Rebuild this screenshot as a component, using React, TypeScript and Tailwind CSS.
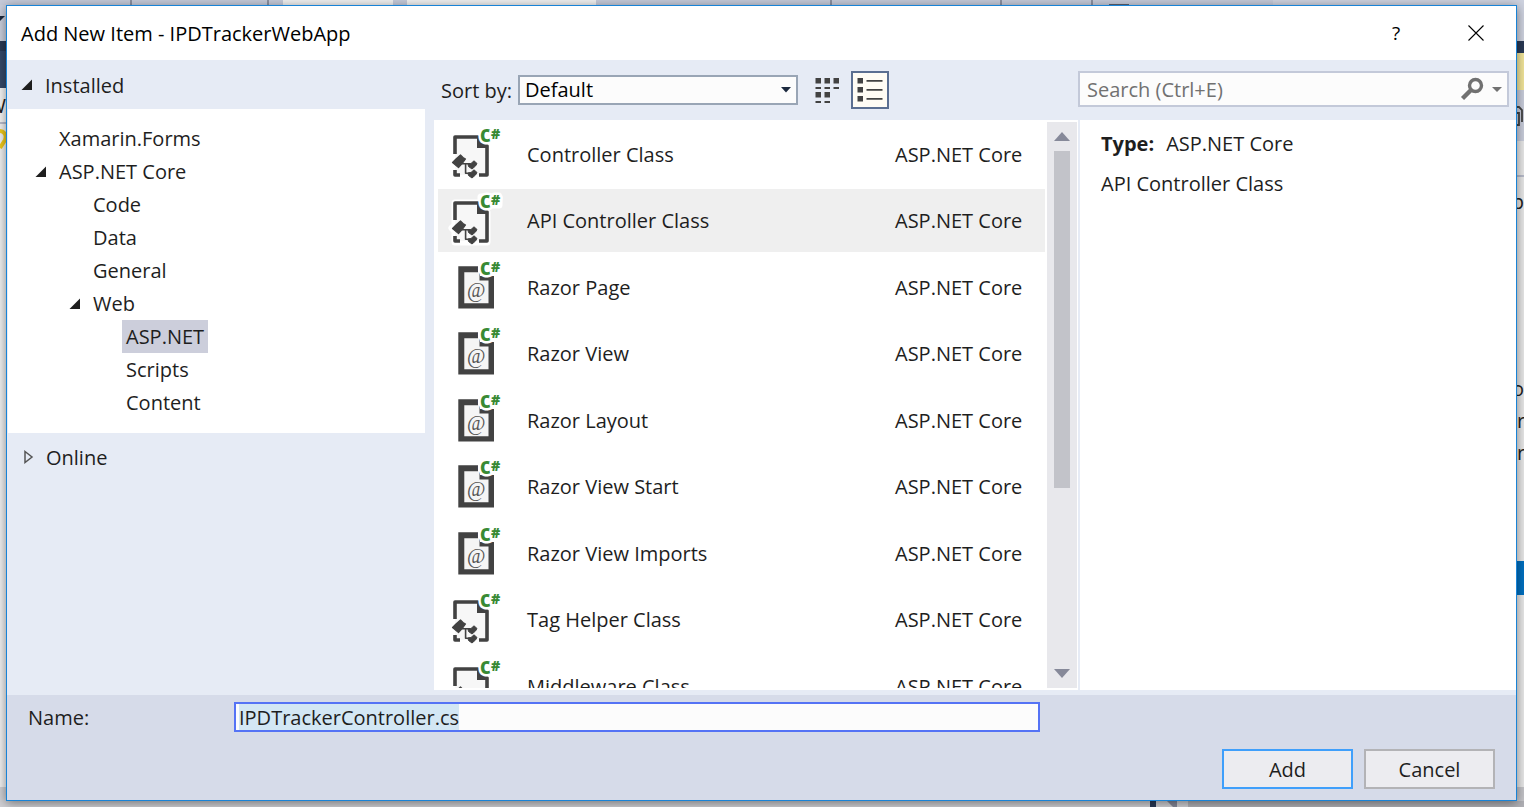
import { useEffect, useRef, useState } from "react";

type Glyph = "class" | "razor";

const items: { name: string; glyph: Glyph }[] = [
  { name: "Controller Class", glyph: "class" },
  { name: "API Controller Class", glyph: "class" },
  { name: "Razor Page", glyph: "razor" },
  { name: "Razor View", glyph: "razor" },
  { name: "Razor Layout", glyph: "razor" },
  { name: "Razor View Start", glyph: "razor" },
  { name: "Razor View Imports", glyph: "razor" },
  { name: "Tag Helper Class", glyph: "class" },
  { name: "Middleware Class", glyph: "class" },
];

const tree: { label: string; indent: string; open?: boolean }[] = [
  { label: "Xamarin.Forms", indent: "pl-[28px]" },
  { label: "ASP.NET Core", indent: "pl-[28px]", open: true },
  { label: "Code", indent: "pl-[62px]" },
  { label: "Data", indent: "pl-[62px]" },
  { label: "General", indent: "pl-[62px]" },
  { label: "Web", indent: "pl-[62px]", open: true },
  { label: "ASP.NET", indent: "pl-[95px]" },
  { label: "Scripts", indent: "pl-[95px]" },
  { label: "Content", indent: "pl-[95px]" },
];

function OpenArrow() {
  return (
    <svg width="12" height="12" viewBox="0 0 12 12" aria-hidden="true">
      <path d="M11 0.5V11H0.5Z" fill="#1e1e1e" />
    </svg>
  );
}

function CSharp() {
  return (
    <g
      fill="#388a34"
      stroke="#fff"
      strokeWidth="5"
      strokeLinejoin="round"
      paintOrder="stroke"
      fontFamily="'Open Sans', sans-serif"
      fontWeight="800"
    >
      <text x="30" y="14" fontSize="17">C</text>
      <text x="41" y="11" fontSize="14">#</text>
    </g>
  );
}

function ClassIcon() {
  return (
    <svg width="52" height="54" viewBox="0 0 52 54" className="shrink-0 overflow-visible" aria-hidden="true">
      <path
        d="M5 9H28L37 18V48H5Z M10 26L2 34L8 40Z M31 3H49V11H31Z"
        fill="#f7f7f7"
        stroke="#fff"
        strokeWidth="7"
        strokeLinejoin="round"
      />
      <path d="M5 9H28L37 18V47H5Z" fill="#f7f7f7" />
      <g fill="#424242" stroke="#424242" strokeLinejoin="round">
        <path d="M5 26V9H28L37 18V47H29M5 42V47H10" fill="none" strokeWidth="3.6" />
        <path d="M27 8L38 18V20H27Z" stroke="none" />
        <path d="M10.5 27L13 29.5L15.5 31L13 34.5L8.5 39.5L2.5 34.5L6 31Z" strokeWidth="1.2" />
        <path d="M12 35.8H20M15.6 35.8V45.2H20" fill="none" strokeWidth="1.6" />
        <path
          d="M18 36L21 35.5L24 32.8L27 35.5L25.5 38L22 41L18.5 38.5Z M18 45L21 44.5L24 41.8L27 44.5L25.5 47L22 50L18.5 47.5Z"
          strokeWidth="1"
        />
      </g>
      <CSharp />
    </svg>
  );
}

function RazorIcon() {
  return (
    <svg width="52" height="54" viewBox="0 0 52 54" className="shrink-0 overflow-visible" aria-hidden="true">
      <path d="M8.3 5.3H28V12H30V15H44V47.5H8.3Z" fill="#424242" />
      <path d="M14.3 11.3H29.5V19.5H38.5V42.3H14.3Z" fill="#f5f5f5" />
      <text
        x="26.2"
        y="36"
        textAnchor="middle"
        fontSize="20"
        fill="#555"
        fontFamily="'Liberation Serif', serif"
      >
        @
      </text>
      <CSharp />
    </svg>
  );
}

function TemplateList() {
  const [selected, setSelected] = useState(1);
  return (
    <div className="flex min-h-0 flex-1 bg-white">
      <ul className="mb-[2px] min-w-0 flex-1 overflow-hidden pt-[3px] pr-0.5 pl-1">
        {items.map((item, i) => (
          <li key={item.name} className="h-[66px] even:h-[67px]">
            <button
              type="button"
              aria-pressed={selected === i}
              onClick={() => setSelected(i)}
              className={`flex h-[63px] w-full items-center pl-3 text-left ${
                selected === i ? "bg-[#efefef]" : "bg-white"
              }`}
            >
              {item.glyph === "class" ? <ClassIcon /> : <RazorIcon />}
              <span className="ml-[25px] flex-1 whitespace-nowrap">{item.name}</span>
              <span className="w-[150px] whitespace-nowrap">ASP.NET Core</span>
            </button>
          </li>
        ))}
      </ul>
      <div className="mt-[2px] mr-[1px] mb-[2px] flex w-[30px] flex-col items-center bg-[#e8e8ec] py-2.5">
        <svg width="16" height="9" viewBox="0 0 16 9" aria-hidden="true">
          <path d="M8 0L16 9H0Z" fill="#868999" />
        </svg>
        <div className="mt-2.5 flex w-4 flex-1 flex-col">
          <div className="h-[65%] bg-[#c2c3c9]" />
        </div>
        <svg width="16" height="9" viewBox="0 0 16 9" aria-hidden="true">
          <path d="M8 9L16 0H0Z" fill="#868999" />
        </svg>
      </div>
    </div>
  );
}

function Sidebar() {
  return (
    <nav className="flex flex-col pr-[9px]" aria-label="Template categories">
      <div className="flex h-[49px] items-center gap-3 pt-px pl-3.5">
        <OpenArrow />
        <span>Installed</span>
      </div>
      <ul className="ml-px h-[324px] bg-white pt-[13px] leading-[33px]">
        {tree.map((node) => (
          <li key={node.label} className={`flex h-[33px] items-center ${node.indent}`}>
            {node.open ? (
              <span className="-ml-px mr-3 flex w-3 shrink-0">
                <OpenArrow />
              </span>
            ) : (
              <span className="w-[23px] shrink-0" />
            )}
            <a
              href="#"
              className={node.label === "ASP.NET" ? "-ml-1 bg-[#cccedb] px-1" : ""}
            >
              {node.label}
            </a>
          </li>
        ))}
      </ul>
      <div className="flex h-12 items-center gap-3 pl-4">
        <svg width="11" height="14" viewBox="0 0 11 14" aria-hidden="true">
          <path d="M2 1.5L9 7L2 12.5Z" fill="none" stroke="#555" strokeWidth="1.5" />
        </svg>
        <span>Online</span>
      </div>
    </nav>
  );
}

function SortBar() {
  return (
    <div className="flex h-[60px] items-center pl-[7px]">
      <label htmlFor="sort" className="whitespace-nowrap">Sort by:</label>
      <div className="ml-1.5 grid w-[280px] items-center">
        <select
          id="sort"
          className="col-start-1 row-start-1 h-[30px] appearance-none border-2 border-[#99a5b5] bg-[#fcfcfc] pl-[5px] leading-[26px] text-black"
        >
          <option>Default</option>
        </select>
        <svg
          width="10"
          height="6"
          viewBox="0 0 10 6"
          className="pointer-events-none col-start-1 row-start-1 mr-[7px] justify-self-end"
          aria-hidden="true"
        >
          <path d="M0 0H10L5 5.5Z" fill="#1b293e" />
        </svg>
      </div>
      <button type="button" aria-label="Medium icons" className="ml-[17px]">
        <svg width="25" height="27" viewBox="0 0 25 27" fill="#424242" aria-hidden="true">
          <path d="M0.5 1h5.5v5.5h-5.5zM9.5 1h5.5v5.5h-5.5zM18.5 1h5.5v5.5h-5.5zM0.5 15h5.5v5.5h-5.5zM9.5 15h5.5v5.5h-5.5z" />
          <path d="M0.5 10h5.5v2h-5.5zM9.5 10h5.5v2h-5.5zM18.5 10h5.5v2h-5.5zM0.5 24h5.5v2h-5.5zM9.5 24h5.5v2h-5.5z" />
        </svg>
      </button>
      <button
        type="button"
        aria-label="Small icons"
        className="ml-[11px] flex h-[38px] w-[38px] items-center justify-center border-2 border-[#5b6f91] bg-[#fffcf4]"
      >
        <svg width="26" height="26" viewBox="0 0 26 26" fill="#424242" aria-hidden="true">
          <path d="M0.5 1h5.5v5.5h-5.5zM0.5 10h5.5v5.5h-5.5zM0.5 19h5.5v5.5h-5.5z" />
          <path d="M9.5 3h16v1.8h-16zM9.5 12h16v1.8h-16zM9.5 21h16v1.8h-16z" />
        </svg>
      </button>
    </div>
  );
}

function Details() {
  return (
    <div className="flex flex-col">
      <div className="flex h-[60px] items-center pr-[7px] pb-0.5">
        <div className="flex h-9 flex-1 items-center border-2 border-[#c3c9d9] bg-[#fcfcfc] pr-[5px]">
          <input
            type="search"
            aria-label="Search"
            placeholder="Search (Ctrl+E)"
            className="min-w-0 flex-1 bg-transparent pl-[7px] outline-none placeholder:text-[#717171]"
          />
          <svg width="24" height="24" viewBox="0 0 24 24" aria-hidden="true">
            <circle cx="15.5" cy="8.5" r="6" fill="none" stroke="#717171" strokeWidth="3.4" />
            <path d="M11 13L2.5 21.5" stroke="#717171" strokeWidth="4.4" />
          </svg>
          <svg width="10" height="5" viewBox="0 0 10 5" className="ml-2" aria-hidden="true">
            <path d="M0 0H10L5 5Z" fill="#717171" />
          </svg>
        </div>
      </div>
      <div className="flex-1 border-l-2 border-[#e6ebf5] bg-white pt-1 pl-[21px] leading-10">
        <p>
          <strong className="mr-3 font-bold">Type:</strong>
          ASP.NET Core
        </p>
        <p>API Controller Class</p>
      </div>
    </div>
  );
}

function NameRow() {
  const [name, setName] = useState("IPDTrackerController.cs");
  const field = useRef<HTMLInputElement>(null);
  useEffect(() => {
    field.current?.focus();
    field.current?.select();
  }, []);
  return (
    <div className="flex items-center pl-[21px]">
      <label htmlFor="name" className="w-[206px]">Name:</label>
      <input
        id="name"
        ref={field}
        value={name}
        onChange={(e) => setName(e.target.value)}
        className="h-[30px] w-[806px] border-2 border-[#5573f5] bg-[#fcfcfc] pl-[3px] leading-[26px] outline-none selection:bg-[#d3e7f4] selection:text-[#1e1e1e]"
      />
    </div>
  );
}

function Dialog() {
  return (
    <section
      role="dialog"
      aria-label="Add New Item"
      className="relative z-10 flex min-w-0 flex-1 flex-col border border-[#1883d7] bg-[#e6ebf5] shadow-[0_2px_10px_rgba(0,0,0,0.45)]"
    >
      <header className="flex h-[54px] shrink-0 items-center bg-white pl-3.5 text-black">
        <h1 className="flex-1">Add New Item - IPDTrackerWebApp</h1>
        <button type="button" className="w-20 text-[19px]">?</button>
        <button type="button" aria-label="Close" className="flex h-full w-20 items-center justify-center">
          <svg width="16" height="16" viewBox="0 0 16 16" aria-hidden="true">
            <path d="M0.5 0.5L15.5 15.5M15.5 0.5L0.5 15.5" stroke="#000" strokeWidth="1.1" />
          </svg>
        </button>
      </header>
      <div className="grid min-h-0 flex-1 grid-cols-[427px_minmax(0,1fr)_438px] grid-rows-[minmax(0,1fr)] pb-[5px]">
        <Sidebar />
        <div className="flex min-h-0 flex-col">
          <SortBar />
          <TemplateList />
        </div>
        <Details />
      </div>
      <footer className="flex h-[105px] shrink-0 flex-col justify-between bg-[#d6dbe9] pt-[7px] pb-[11px]">
        <NameRow />
        <div className="flex justify-end gap-[11px] pr-[21px]">
          <button type="button" className="h-10 w-[131px] border-2 border-[#3f9ffb] bg-[#ececf0]">Add</button>
          <button type="button" className="h-10 w-[131px] border-2 border-[#b3b3b6] bg-[#ececf0]">Cancel</button>
        </div>
      </footer>
    </section>
  );
}

function LeftEdge() {
  return (
    <div className="flex w-1.5 shrink-0 flex-col overflow-hidden bg-[#f0f0f0]" aria-hidden="true">
      <div className="flex h-9 items-center bg-[#c9cedc]">
        <svg width="6" height="6" viewBox="0 0 6 6" className="mb-2">
          <path d="M0 0H5L0 5Z" fill="#1b293e" />
        </svg>
      </div>
      <div className="h-2.5 bg-[#293955]" />
      <div className="h-[37px] bg-[#35496a]" />
      <div className="flex h-9 items-center justify-end border-b-2 border-[#b8bccb] bg-[#f5f5f5]">W</div>
      <svg width="6" height="34" viewBox="0 0 6 34">
        <path d="M0 7C4 7 7 11 5 16L0 24" fill="none" stroke="#eec91c" strokeWidth="4" />
      </svg>
      <div className="flex-1" />
      <div className="h-3.5 bg-[#cfcfd3]" />
    </div>
  );
}

function RightEdge() {
  return (
    <div className="flex w-[7px] shrink-0 flex-col overflow-hidden bg-[#e8e8e8] text-[#1e1e1e]" aria-hidden="true">
      <div className="h-9 bg-[#ced2df]" />
      <div className="h-3 bg-[#293955]" />
      <div className="h-[37px] bg-[#f2e59a]" />
      <div className="flex h-[51px] items-center bg-[#c9cddb]">
        <svg width="7" height="22" viewBox="0 0 7 22">
          <path d="M0 2H2L5 5V7M0 8H2V20H0M5 7V17" fill="none" stroke="#424242" strokeWidth="1.8" />
        </svg>
      </div>
      <div className="h-9 border-b-2 border-[#b8bccb]" />
      <div className="flex h-12 items-center justify-end">p</div>
      <div className="h-[147px]" />
      <div className="flex h-8 items-center justify-end">o</div>
      <div className="flex h-8 items-center">r</div>
      <div className="flex h-8 items-center">r</div>
      <div className="h-[93px]" />
      <div className="h-[34px] bg-[#0070c0]" />
      <div className="flex-1" />
      <div className="h-3.5 bg-[#c4c4c8]" />
    </div>
  );
}

export default function App() {
  return (
    <div className="flex h-screen flex-col overflow-hidden bg-[#c5cad9] font-['Open_Sans','Noto_Sans',sans-serif] text-[20px] leading-[27px] text-[#1e1e1e]">
      <div className="flex h-[5px] shrink-0" aria-hidden="true">
        <div className="w-[132px] border-r-2 border-[#8b90a0]" />
        <div className="w-[137px] border-r-2 border-[#8b90a0]" />
        <div className="w-3.5" />
        <div className="w-[110px] bg-[#f0f0f0]" />
        <div className="w-3.5" />
        <div className="w-[189px] bg-[#f0f0f0]" />
        <div className="w-[236px] border-r-2 border-[#8b90a0]" />
        <div className="w-[170px] border-r-2 border-[#8b90a0]" />
        <div className="w-[91px] border-r-2 border-[#8b90a0]" />
        <div className="ml-4 h-px w-5 self-end bg-[#5c6070]" />
        <div className="ml-36 flex-1 bg-[#ced2df]" />
      </div>
      <div className="flex min-h-0 flex-1">
        <LeftEdge />
        <Dialog />
        <RightEdge />
      </div>
      <div className="flex h-1.5 shrink-0 bg-[#cfcfd3]" aria-hidden="true">
        <div className="flex-1" />
        <div className="w-1.5 bg-[#293955]" />
        <div className="flex w-8 justify-center">
          <svg width="10" height="6" viewBox="0 0 10 6">
            <path d="M0 0H10V6H6Z" fill="#868999" />
          </svg>
        </div>
        <div className="w-[336px] bg-[#b0b0b5]" />
      </div>
    </div>
  );
}
